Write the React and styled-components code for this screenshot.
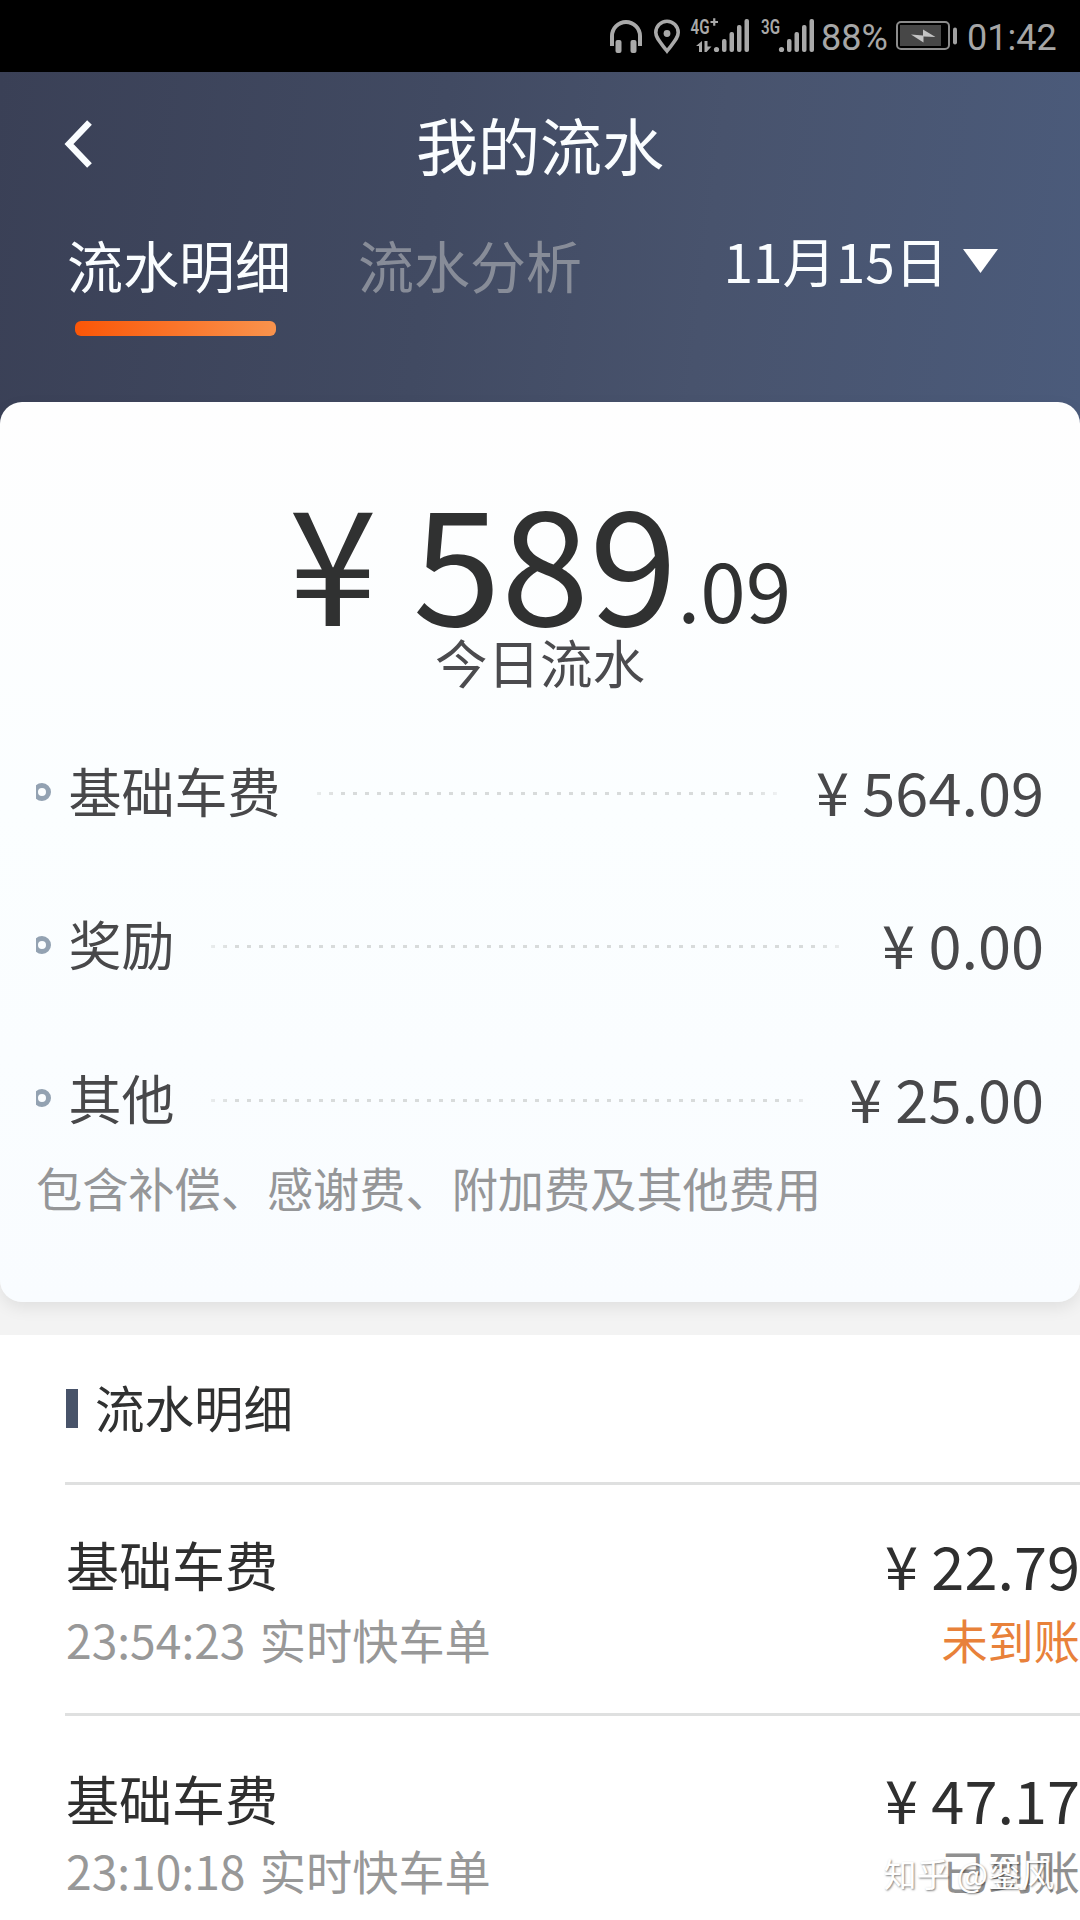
import styled, { createGlobalStyle, css } from "styled-components";

const fees = [
    { label: "基础车费", amount: "564.09" },
    { label: "奖励", amount: "0.00" },
    { label: "其他", amount: "25.00" }
];

const records = [
    { label: "基础车费", amount: "22.79", info: "23:54:23 实时快车单", status: "未到账", pending: true },
    { label: "基础车费", amount: "47.17", info: "23:10:18 实时快车单", status: "已到账", pending: false }
];

export default function App() {
    return (
        <>
            <GlobalStyle />
            <Screen>
                <StatusBar />
                <Header />
                <Body>
                    <Summary />
                    <Details />
                </Body>
                <Watermark>知乎 @銮风</Watermark>
            </Screen>
        </>
    );
}

function StatusBar() {
    return (
        <Status>
            <svg width="226" height="72" viewBox="0 0 226 72" fill="none">
                <g stroke="#a9a9a9" strokeWidth="3.6">
                    <path d="M12 46V36a14 14 0 0 1 28 0v10" strokeWidth="4" />
                    <path d="M67 51C60 42 55.800 38 55.800 32.500a11.200 11.200 0 0 1 22.400 0C78.200 38 74 42 67 51Z" />
                </g>
                <g fill="#a9a9a9">
                    <rect x="15.500" y="40" width="6" height="13" rx="2" />
                    <rect x="30.500" y="40" width="6" height="13" rx="2" />
                    <circle cx="67" cy="33.500" r="3.400" />
                    <path d="M96 46l6-5v11h-3v-6zM104.500 41h3v5.500h4l-5 5.500h-2z" />
                    <circle cx="116.500" cy="49.500" r="2.600" />
                    <rect x="122" y="39" width="4.500" height="13" rx="2" />
                    <rect x="129.500" y="32" width="4.500" height="20" rx="2" />
                    <rect x="137" y="25" width="4.500" height="27" rx="2" />
                    <rect x="144.500" y="19" width="4.500" height="33" rx="2" />
                    <circle cx="181.500" cy="49.500" r="2.600" />
                    <rect x="187" y="39" width="4.500" height="13" rx="2" />
                    <rect x="194.500" y="32" width="4.500" height="20" rx="2" />
                    <rect x="202" y="25" width="4.500" height="27" rx="2" />
                    <rect x="209.500" y="19" width="4.500" height="33" rx="2" />
                    <path d="M110.500 22h7.500M114.250 18.250v7.500" stroke="#a9a9a9" strokeWidth="2.200" />
                    <NetText x="90.500" y="34" textLength="19" lengthAdjust="spacingAndGlyphs">4G</NetText>
                    <NetText x="161" y="34" textLength="19" lengthAdjust="spacingAndGlyphs">3G</NetText>
                </g>
            </svg>
            <StatusText $width={69}>88%</StatusText>
            <svg width="64" height="32" viewBox="0 0 64 32">
                <rect x="1" y="2" width="52" height="27" rx="4" fill="none" stroke="#8c8c8c" strokeWidth="2" />
                <rect x="4" y="5" width="41" height="21" fill="#474747" />
                <path d="M15 14.500l12 1V9.500L39.500 17l-12-.5v6z" fill="#c4c4c4" />
                <rect x="57" y="7.500" width="4" height="17" rx="2" fill="#a0a0a0" />
            </svg>
            <StatusText>01:42</StatusText>
        </Status>
    );
}

function Header() {
    return (
        <HeaderArea>
            <NavBar>
                <BackButton>
                    <svg width="30" height="50" viewBox="0 0 30 50" fill="none">
                        <path d="M25.500 3.500L5 25l20.500 21.500" stroke="#fafdff" strokeWidth="6.500" />
                    </svg>
                </BackButton>
                <Title>我的流水</Title>
            </NavBar>
            <TabRow>
                <Tab $active>流水明细</Tab>
                <Tab>流水分析</Tab>
                <DatePicker>
                    11月15日
                    <svg width="35" height="24" viewBox="0 0 35 24">
                        <path d="M0 0h35L17.500 24z" fill="#fff" />
                    </svg>
                </DatePicker>
            </TabRow>
        </HeaderArea>
    );
}

function Summary() {
    return (
        <Card>
            <Total>¥ 589<small>.09</small></Total>
            <Caption>今日流水</Caption>
            <FeeList>
                {fees.map(fee => (
                    <FeeRow key={fee.label}>
                        <Bullet />
                        <span>{fee.label}</span>
                        <Dots />
                        <Amount>¥ {fee.amount}</Amount>
                    </FeeRow>
                ))}
            </FeeList>
            <Note>包含补偿、感谢费、附加费及其他费用</Note>
        </Card>
    );
}

function Details() {
    return (
        <DetailArea>
            <SectionTitle>流水明细</SectionTitle>
            {records.map(record => (
                <Record key={record.info}>
                    <RecordMain>
                        <span>{record.label}</span>
                        <Amount>¥ {record.amount}</Amount>
                    </RecordMain>
                    <RecordSub>
                        <span>{record.info}</span>
                        <State $pending={record.pending}>{record.status}</State>
                    </RecordSub>
                </Record>
            ))}
        </DetailArea>
    );
}

const GlobalStyle = createGlobalStyle`
    *, *::before, *::after {
        box-sizing: border-box;
    }

    body {
        margin: 0;
        background-color: #fff;
        font-family: 'Noto Sans CJK SC', sans-serif;
    }
`;

const Screen = styled.div`
    position: relative;
    width: 1080px;
    height: 1920px;
    overflow: hidden;
    white-space: nowrap;
    display: flex;
    flex-direction: column;
`;

const Status = styled.div`
    height: 72px;
    flex-shrink: 0;
    padding-left: 600px;
    background-color: #000;
    display: flex;
    align-items: center;

    svg {
        flex-shrink: 0;
    }
`;

const NetText = styled.text`
    font-family: Roboto, sans-serif;
    font-size: 20px;
    font-weight: 600;
`;

const StatusText = styled.span`
    width: ${({ $width }) => $width ? `${$width}px` : "auto"};
    margin-left: -5px;
    padding-top: 3px;
    font-family: Roboto, sans-serif;
    font-size: 36px;
    line-height: 44px;
    color: #a6a6a6;

    & + svg {
        margin-left: 6px;
    }

    svg + & {
        margin-left: -5px;
    }

    &:last-child {
        margin-left: 7px;
    }
`;

const HeaderArea = styled.header`
    height: 360px;
    flex-shrink: 0;
    background: linear-gradient(97deg, #3a4056 0%, #414a62 40%, #48536d 65%, #4b5b7b 100%);
    color: #fafdff;
`;

const NavBar = styled.div`
    height: 142px;
    padding: 0 62px;
    display: grid;
    grid-template-columns: 60px 1fr 60px;
    align-items: center;
`;

const BackButton = styled.button`
    border: none;
    padding: 2px 0 0 2px;
    background: none;
    display: flex;
`;

const Title = styled.h1`
    margin: 0;
    padding-top: 1px;
    font-size: 62px;
    font-weight: 400;
    text-align: center;
`;

const TabRow = styled.div`
    padding: 0 82px 0 67px;
    display: flex;
    align-items: flex-start;
    gap: 67px;
`;

const Tab = styled.div`
    font-size: 56px;
    line-height: 100px;
    color: #878c98;

    ${({ $active }) => $active && css`
        color: #fafdff;

        &::after {
            content: "";
            display: block;
            width: 201px;
            height: 15px;
            margin: 7px 0 0 8px;
            border-radius: 6px;
            background: linear-gradient(90deg, #fb5607, #f9934d);
        }
    `}
`;

const DatePicker = styled.div`
    margin-left: auto;
    display: flex;
    align-items: center;
    gap: 15px;
    font-size: 53.2px;
    line-height: 91px;

    svg {
        margin-top: 3px;
    }
`;

const Body = styled.main`
    flex: 1;
    margin-top: -30px;
    background: linear-gradient(transparent 50px, #f3f3f3 50px);
`;

const Card = styled.section`
    height: 900px;
    padding: 75px 36px 0;
    border-radius: 22px;
    background: linear-gradient(#fefefe 0%, #fbfeff 45%, #f9fcff 100%);
    box-shadow: 0 6px 16px rgba(0, 0, 0, 0.08);
`;

const Total = styled.div`
    height: 161px;
    font-size: 159px;
    line-height: 161px;
    text-align: center;
    color: #303131;

    small {
        font-size: 82px;
        line-height: 1;
        vertical-align: 3px;
    }
`;

const Caption = styled.div`
    font-size: 52.5px;
    line-height: 46px;
    text-align: center;
    color: #4b4b4e;
`;

const FeeList = styled.div`
    margin-top: 72px;
    display: flex;
    flex-direction: column;
    gap: 85.3px;
`;

const FeeRow = styled.div`
    height: 68px;
    display: flex;
    align-items: center;
    font-size: 53px;
    line-height: 68px;
    color: #48484a;
`;

const Bullet = styled.i`
    width: 15px;
    height: 18px;
    margin: 3px 17.5px 0 0;
    display: flex;
    justify-content: flex-end;
    overflow: hidden;

    &::before {
        content: "";
        flex-shrink: 0;
        width: 18px;
        height: 18px;
        border: 5px solid #93a2b2;
        border-radius: 50%;
    }
`;

const Dots = styled.i`
    flex: 1;
    height: 3px;
    margin: 7px 38px 0 36px;
    background: linear-gradient(90deg, #d8dbdb 4px, transparent 4px) 0 0 / 12px 3px repeat-x;
    mask-image: linear-gradient(90deg, rgba(0, 0, 0, 0.5), #000 24px, #000 calc(100% - 24px), rgba(0, 0, 0, 0.3));
`;

const Amount = styled.span`
    font-size: 59.5px;
`;

const Note = styled.p`
    margin: 33px 0 0;
    font-size: 46.2px;
    line-height: 46px;
    color: #959698;
`;

const DetailArea = styled.section`
    height: 585px;
    margin-top: 33px;
    padding-left: 65px;
    background-color: #fff;
`;

const SectionTitle = styled.h2`
    height: 147px;
    margin: 0;
    padding: 0 0 5px 1px;
    display: flex;
    align-items: center;
    gap: 17px;
    font-size: 49.5px;
    font-weight: 400;
    color: #303131;

    &::before {
        content: "";
        width: 12px;
        height: 39px;
        margin-top: 5px;
        background-color: #485369;
    }
`;

const Record = styled.div`
    height: 231px;
    padding-top: 41px;
    border-top: 3px solid #dfe0e0;
`;

const RecordMain = styled.div`
    height: 76px;
    padding-left: 1px;
    display: flex;
    justify-content: space-between;
    font-size: 53px;
    line-height: 76px;
    color: #2f2f2f;

    ${Record}:last-child & {
        padding-top: 3px;
    }
`;

const RecordSub = styled.div`
    padding-left: 1px;
    display: flex;
    justify-content: space-between;
    font-size: 46.2px;
    line-height: 74px;
    word-spacing: 4px;
    color: #989898;
`;

const State = styled.span`
    color: ${({ $pending }) => $pending ? "#e8813a" : "#909090"};
`;

const Watermark = styled.div`
    position: absolute;
    right: 26px;
    bottom: 22px;
    font-size: 33px;
    line-height: 50px;
    color: #fff;
    text-shadow: 1px 1px 2px rgba(0, 0, 0, 0.5);
`;
